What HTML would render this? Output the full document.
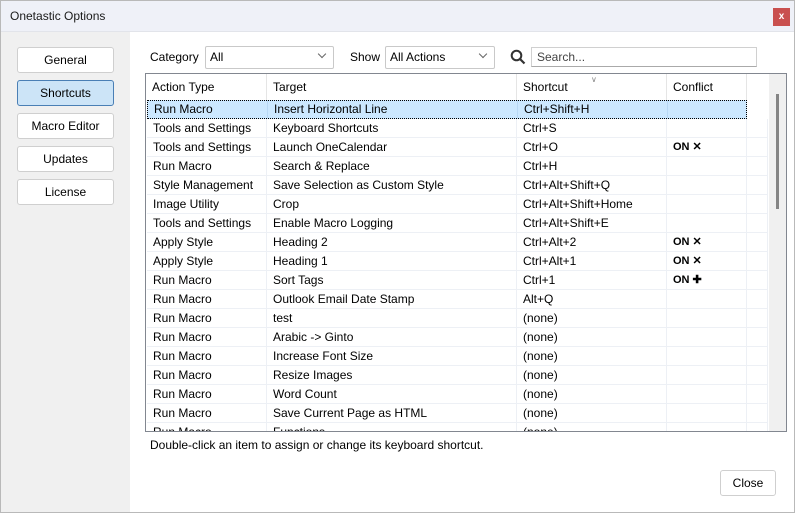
<!DOCTYPE html>
<html><head><meta charset="utf-8"><style>
*{box-sizing:border-box;margin:0;padding:0}
body{width:795px;height:513px;overflow:hidden;font-family:"Liberation Sans",sans-serif;font-size:12px;color:#000;background:#fff;position:relative}
.win{position:absolute;left:0;top:0;width:795px;height:513px;background:#f0f0f0}
.frame{position:absolute;left:0;top:0;width:795px;height:513px;border:1px solid #b9b9b9;pointer-events:none;z-index:5}
.title{position:absolute;left:0;top:0;width:795px;height:32px;background:#eff1f8;border-bottom:1px solid #e2e4ea}
.title span{position:absolute;left:10px;top:9px;font-size:12px;color:#1a1a1a}
.xbtn{position:absolute;left:773px;top:8px;width:17px;height:18px;background:#c9504f;color:#fff;font-size:10px;font-weight:bold;text-align:center;line-height:17px}
.main{position:absolute;left:130px;top:32px;width:665px;height:481px;background:#fff}
.nb{position:absolute;left:17px;width:97px;height:26px;background:#fff;border:1px solid #cfcfcf;border-radius:3px;text-align:center;line-height:24px;font-size:12px}
.nb.sel{background:#cce4f7;border-color:#4a7fb5}
.lbl{position:absolute;top:50px;font-size:12px}
.combo{position:absolute;top:46px;height:23px;border:1px solid #c9c9c9;border-radius:2px;background:#fff;padding-left:4px;line-height:21px}
.combo i{position:absolute;right:8px;top:4px;width:6px;height:6px;border-right:1px solid #666;border-bottom:1px solid #666;transform:rotate(45deg)}
.search{position:absolute;left:531px;top:47px;width:226px;height:20px;border:1px solid #d0d0d0;border-bottom-color:#aaa;padding-left:5px;line-height:18px;color:#444}
.tbl{position:absolute;left:145px;top:73px;width:642px;height:359px;border:1px solid #828790;overflow:hidden;background:#fff}
.hdr{position:absolute;left:0;top:0;height:26px;width:622px}
.hc{position:absolute;top:0;height:26px;line-height:27px;padding-left:6px;border-right:1px solid #e5e5e5}
.row{position:absolute;left:1px;height:19px;width:621px;border-bottom:1px solid #edf0f5}
.row div{position:absolute;top:0;height:18px;line-height:18px;padding-left:6px;white-space:nowrap;border-right:1px solid #edf0f5}
.row.sel{background:#cce8ff;border:1px dotted #000;width:600px;left:1px}
.row.sel div{top:-1px;border-right-color:#b8d8f4}
.c1{left:0;width:120px}.c2{left:120px;width:250px}.c3{left:370px;width:150px}.c4{left:520px;width:80px}.c5{left:600px;width:21px}
.on{font-weight:bold;font-size:11px}
.sb{position:absolute;right:0;top:0;width:17px;height:357px;background:#f0f0f0}
.sb i{position:absolute;left:7px;top:20px;width:3px;height:115px;background:#858585}
.foot{position:absolute;left:150px;top:438px;font-size:12px}
.close{position:absolute;left:720px;top:470px;width:56px;height:26px;border:1px solid #cfcfcf;border-radius:3px;background:#fff;text-align:center;line-height:24px}
</style></head><body>
<div class="win">
<div class="title"><span>Onetastic Options</span><div class="xbtn">x</div></div>
<div class="main"></div>
<div class="nb" style="top:47px">General</div>
<div class="nb sel" style="top:80px">Shortcuts</div>
<div class="nb" style="top:113px">Macro Editor</div>
<div class="nb" style="top:146px">Updates</div>
<div class="nb" style="top:179px">License</div>
<div class="lbl" style="left:150px">Category</div>
<div class="combo" style="left:205px;width:129px">All<i></i></div>
<div class="lbl" style="left:350px">Show</div>
<div class="combo" style="left:385px;width:110px">All Actions<i></i></div>
<svg style="position:absolute;left:510px;top:49px" width="16" height="16" viewBox="0 0 16 16"><circle cx="6.5" cy="6.5" r="4.8" fill="none" stroke="#333" stroke-width="2"/><line x1="10" y1="10" x2="14.5" y2="14.5" stroke="#333" stroke-width="2.2"/></svg>
<div class="search">Search...</div>
<div class="tbl">
<div class="hdr">
<div class="hc" style="left:0;width:121px">Action Type</div>
<div class="hc" style="left:121px;width:250px">Target</div>
<div class="hc" style="left:371px;width:150px">Shortcut</div>
<div class="hc" style="left:521px;width:80px">Conflict</div>
<div style="position:absolute;left:445px;top:1px;font-size:8px;color:#888">&#8744;</div>
</div>
<div class="row sel" style="top:26px"><div class="c1">Run Macro</div><div class="c2">Insert Horizontal Line</div><div class="c3">Ctrl+Shift+H</div><div class="c4" style="border-right:none"></div></div>
<div class="row" style="top:45px"><div class="c1">Tools and Settings</div><div class="c2">Keyboard Shortcuts</div><div class="c3">Ctrl+S</div><div class="c4"></div><div class="c5"></div></div>
<div class="row" style="top:64px"><div class="c1">Tools and Settings</div><div class="c2">Launch OneCalendar</div><div class="c3">Ctrl+O</div><div class="c4 on">ON ✕</div><div class="c5"></div></div>
<div class="row" style="top:83px"><div class="c1">Run Macro</div><div class="c2">Search &amp; Replace</div><div class="c3">Ctrl+H</div><div class="c4"></div><div class="c5"></div></div>
<div class="row" style="top:102px"><div class="c1">Style Management</div><div class="c2">Save Selection as Custom Style</div><div class="c3">Ctrl+Alt+Shift+Q</div><div class="c4"></div><div class="c5"></div></div>
<div class="row" style="top:121px"><div class="c1">Image Utility</div><div class="c2">Crop</div><div class="c3">Ctrl+Alt+Shift+Home</div><div class="c4"></div><div class="c5"></div></div>
<div class="row" style="top:140px"><div class="c1">Tools and Settings</div><div class="c2">Enable Macro Logging</div><div class="c3">Ctrl+Alt+Shift+E</div><div class="c4"></div><div class="c5"></div></div>
<div class="row" style="top:159px"><div class="c1">Apply Style</div><div class="c2">Heading 2</div><div class="c3">Ctrl+Alt+2</div><div class="c4 on">ON ✕</div><div class="c5"></div></div>
<div class="row" style="top:178px"><div class="c1">Apply Style</div><div class="c2">Heading 1</div><div class="c3">Ctrl+Alt+1</div><div class="c4 on">ON ✕</div><div class="c5"></div></div>
<div class="row" style="top:197px"><div class="c1">Run Macro</div><div class="c2">Sort Tags</div><div class="c3">Ctrl+1</div><div class="c4 on">ON ✚</div><div class="c5"></div></div>
<div class="row" style="top:216px"><div class="c1">Run Macro</div><div class="c2">Outlook Email Date Stamp</div><div class="c3">Alt+Q</div><div class="c4"></div><div class="c5"></div></div>
<div class="row" style="top:235px"><div class="c1">Run Macro</div><div class="c2">test</div><div class="c3">(none)</div><div class="c4"></div><div class="c5"></div></div>
<div class="row" style="top:254px"><div class="c1">Run Macro</div><div class="c2">Arabic -&gt; Ginto</div><div class="c3">(none)</div><div class="c4"></div><div class="c5"></div></div>
<div class="row" style="top:273px"><div class="c1">Run Macro</div><div class="c2">Increase Font Size</div><div class="c3">(none)</div><div class="c4"></div><div class="c5"></div></div>
<div class="row" style="top:292px"><div class="c1">Run Macro</div><div class="c2">Resize Images</div><div class="c3">(none)</div><div class="c4"></div><div class="c5"></div></div>
<div class="row" style="top:311px"><div class="c1">Run Macro</div><div class="c2">Word Count</div><div class="c3">(none)</div><div class="c4"></div><div class="c5"></div></div>
<div class="row" style="top:330px"><div class="c1">Run Macro</div><div class="c2">Save Current Page as HTML</div><div class="c3">(none)</div><div class="c4"></div><div class="c5"></div></div>
<div class="row" style="top:349px"><div class="c1">Run Macro</div><div class="c2">Functions</div><div class="c3">(none)</div><div class="c4"></div><div class="c5"></div></div>
<div class="sb"><i></i></div>
</div>
<div class="foot">Double-click an item to assign or change its keyboard shortcut.</div>
<div class="close">Close</div>
</div>
<div class="frame"></div>
</body></html>
